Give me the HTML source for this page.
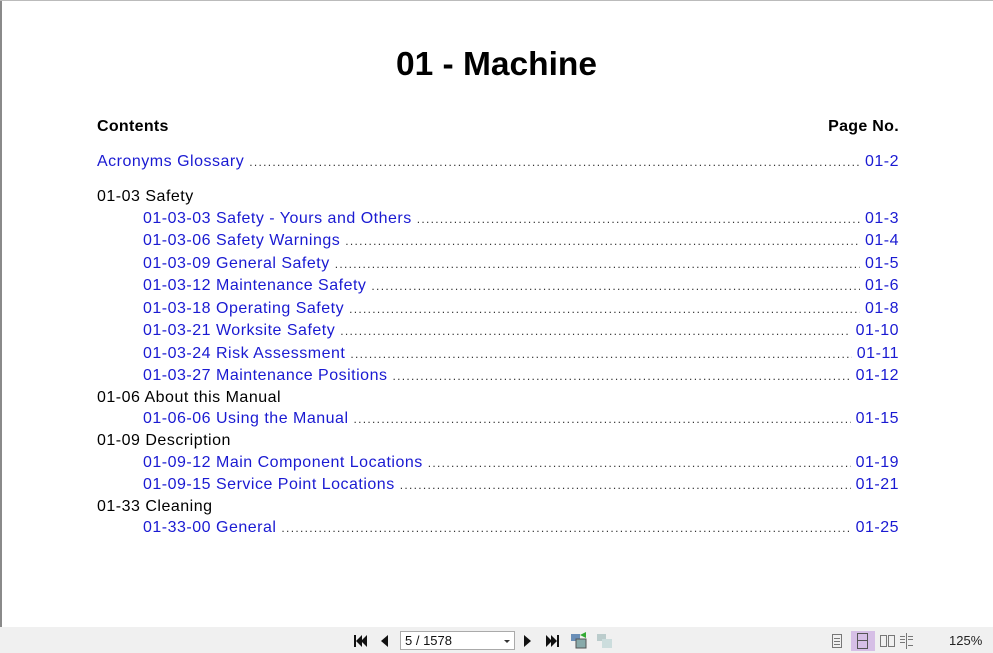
<!DOCTYPE html>
<html><head><style>
body{margin:0;width:993px;height:653px;position:relative;background:#fff;font-family:"Liberation Sans",Arial,sans-serif;overflow:hidden}
.lb{position:absolute;left:0;top:0;width:2px;height:627px;background:#8a8a8a}
.tb{position:absolute;left:0;top:0;width:993px;height:1px;background:#bbb}
h1{position:absolute;left:0;width:993px;top:45px;margin:0;text-align:center;font-size:33.5px;font-weight:bold;line-height:40px}
.r{position:absolute;height:18px;line-height:18px;font-size:16px;display:flex;white-space:nowrap;overflow:hidden;letter-spacing:0.5px}
.b{color:#1a1ad2}
.k{color:#000}
.d{flex:1;overflow:hidden;margin:0 5px;letter-spacing:1.3px;font-size:12px;color:#333}
.bar{position:absolute;left:0;top:627px;width:993px;height:26px;background:#f0f0f0}
</style></head><body>
<div class="lb"></div><div class="tb"></div>
<h1>01 - Machine</h1>
<div class="r k" style="left:97px;top:118px;width:802px;font-weight:bold;letter-spacing:0.3px"><span>Contents</span><span style="flex:1"></span><span>Page No.</span></div>
<div class="r b" style="left:97px;top:153px;width:802px"><span>Acronyms Glossary</span><span class="d">..........................................................................................................................................................................................................</span><span>01-2</span></div>
<div class="r k" style="left:97px;top:188px">01-03 Safety</div>
<div class="r b" style="left:143px;top:210px;width:756px"><span>01-03-03 Safety - Yours and Others</span><span class="d">..........................................................................................................................................................................................................</span><span>01-3</span></div>
<div class="r b" style="left:143px;top:232px;width:756px"><span>01-03-06 Safety Warnings</span><span class="d">..........................................................................................................................................................................................................</span><span>01-4</span></div>
<div class="r b" style="left:143px;top:255px;width:756px"><span>01-03-09 General Safety</span><span class="d">..........................................................................................................................................................................................................</span><span>01-5</span></div>
<div class="r b" style="left:143px;top:277px;width:756px"><span>01-03-12 Maintenance Safety</span><span class="d">..........................................................................................................................................................................................................</span><span>01-6</span></div>
<div class="r b" style="left:143px;top:300px;width:756px"><span>01-03-18 Operating Safety</span><span class="d">..........................................................................................................................................................................................................</span><span>01-8</span></div>
<div class="r b" style="left:143px;top:322px;width:756px"><span>01-03-21 Worksite Safety</span><span class="d">..........................................................................................................................................................................................................</span><span>01-10</span></div>
<div class="r b" style="left:143px;top:345px;width:756px"><span>01-03-24 Risk Assessment</span><span class="d">..........................................................................................................................................................................................................</span><span>01-11</span></div>
<div class="r b" style="left:143px;top:367px;width:756px"><span>01-03-27 Maintenance Positions</span><span class="d">..........................................................................................................................................................................................................</span><span>01-12</span></div>
<div class="r k" style="left:97px;top:389px">01-06 About this Manual</div>
<div class="r b" style="left:143px;top:410px;width:756px"><span>01-06-06 Using the Manual</span><span class="d">..........................................................................................................................................................................................................</span><span>01-15</span></div>
<div class="r k" style="left:97px;top:432px">01-09 Description</div>
<div class="r b" style="left:143px;top:454px;width:756px"><span>01-09-12 Main Component Locations</span><span class="d">..........................................................................................................................................................................................................</span><span>01-19</span></div>
<div class="r b" style="left:143px;top:476px;width:756px"><span>01-09-15 Service Point Locations</span><span class="d">..........................................................................................................................................................................................................</span><span>01-21</span></div>
<div class="r k" style="left:97px;top:498px">01-33 Cleaning</div>
<div class="r b" style="left:143px;top:519px;width:756px"><span>01-33-00 General</span><span class="d">..........................................................................................................................................................................................................</span><span>01-25</span></div>
<div class="bar">
<svg width="993" height="26" style="position:absolute;left:0;top:0">
<g fill="#111">
<rect x="354" y="8" width="2" height="12"/><polygon points="362,8 356,14 362,20"/><polygon points="367,8 361,14 367,20"/>
<polygon points="388,8 381,14 388,20"/>
<polygon points="524,8 531,14 524,20"/>
<polygon points="546,8 552,14 546,20"/><polygon points="551,8 557,14 551,20"/><rect x="557" y="8" width="2" height="12"/>
</g>
<rect x="400.5" y="4.5" width="114" height="18" fill="#fff" stroke="#aaa"/>
<text x="405" y="18" font-size="13" font-family="Liberation Sans" fill="#111">5 / 1578</text>
<polygon points="504,13 510,13 507,16" fill="#333"/>
<rect x="571" y="7" width="9" height="7" fill="#6a8fb8"/><rect x="576" y="12" width="10" height="9" fill="#8aa" stroke="#555" stroke-width="1"/><polygon points="580,8 586,5 586,11" fill="#3a3"/>
<rect x="597" y="7" width="9" height="7" fill="#bcc"/><rect x="602" y="12" width="10" height="9" fill="#cdd"/>
<g fill="none" stroke="#777">
<rect x="832.5" y="7.5" width="9" height="13"/><line x1="834" y1="11.5" x2="840" y2="11.5"/><line x1="834" y1="14.5" x2="840" y2="14.5"/><line x1="834" y1="17.5" x2="840" y2="17.5"/>
</g>
<rect x="851" y="4" width="24" height="20" fill="#d6bfe6"/>
<g fill="none" stroke="#555"><rect x="857.5" y="6.5" width="10" height="15"/><line x1="857" y1="13.5" x2="868" y2="13.5"/></g>
<g fill="none" stroke="#777"><rect x="880.5" y="8.5" width="6" height="11"/><rect x="888.5" y="8.5" width="6" height="11"/>
<path d="M906.5 6v16M900 9.5h5M900 12.5h5M900 15.5h5M908 9.5h5M908 12.5h5M908 18.5h5"/></g>
<text x="949" y="18" font-size="13" font-family="Liberation Sans" fill="#222">125%</text>
</svg>
</div>
</body></html>
